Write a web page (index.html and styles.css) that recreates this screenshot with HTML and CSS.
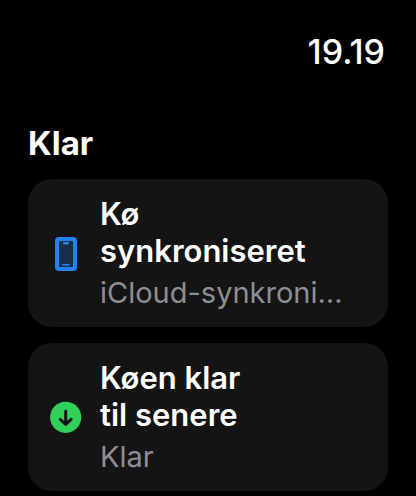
FILE: index.html
```
<!DOCTYPE html>
<html lang="da">
  <head>
    <meta charset="UTF-8" />
    <meta name="viewport" content="width=device-width, initial-scale=1.0" />
    <title>Klar</title>
    <link rel="stylesheet" href="styles.css">
  </head>
  <body>
    <header class="status-bar">
      <time datetime="19:19">19.19</time>
    </header>

    <main>
      <h1>Klar</h1>
      <ul class="cards">
        <li class="card">
          <svg class="icon" viewBox="0 0 32 36" aria-hidden="true">
            <rect x="5" y="2" width="22" height="34" rx="4" fill="#2281f5" />
            <rect x="9" y="6" width="14" height="26" rx="1" fill="#172d4b" />
            <rect x="13" y="7" width="6" height="2.4" rx="1" fill="#2281f5" />
            <rect x="12" y="29" width="8" height="1.6" rx="0.8" fill="#2281f5" />
          </svg>
          <div class="card-text">
            <h2>Kø synkroniseret</h2>
            <p>iCloud-synkronisering</p>
          </div>
        </li>
        <li class="card">
          <svg class="icon" viewBox="0 0 32 36" aria-hidden="true">
            <circle cx="15.7" cy="18.3" r="15.6" fill="#30d158" />
            <path
              d="M15.7 11.9v13.2M10.3 20.3l5.4 5 5.4-5"
              fill="none"
              stroke="#141414"
              stroke-width="3"
              stroke-linecap="round"
              stroke-linejoin="round"
            />
          </svg>
          <div class="card-text">
            <h2>Køen klar til senere</h2>
            <p>Klar</p>
          </div>
        </li>
      </ul>
    </main>
  </body>
</html>
```
FILE: styles.css
```
body {
  margin: 0;
  padding: 32px 28px 4px;
  background: #000;
  color: #fff;
  font-family: Inter, Roboto, sans-serif;
}
h1,
h2,
p {
  margin: 0;
}
.status-bar {
  padding: 0 3px;
  text-align: right;
  font-size: 34px;
  font-weight: 500;
  line-height: 40px;
}
h1 {
  margin-top: 51px;
  font-size: 33px;
  font-weight: 700;
  line-height: 40px;
}
.cards {
  display: flex;
  flex-direction: column;
  gap: 16px;
  margin: 16px 0 0;
  padding: 0;
  list-style: none;
}
.card {
  display: flex;
  align-items: center;
  gap: 18px;
  padding: 16px 40px 16px 22px;
  border-radius: 24px;
  background: #141414;
}
.icon {
  flex: none;
  width: 32px;
  height: 36px;
}
.card-text {
  flex: 1;
  min-width: 0;
}
h2 {
  font-size: 31px;
  font-weight: 600;
  line-height: 37px;
  text-wrap: balance;
}
p {
  margin-top: 6px;
  overflow: hidden;
  color: #8e8e93;
  font-size: 29px;
  line-height: 36px;
  text-overflow: ellipsis;
  white-space: nowrap;
}
```
